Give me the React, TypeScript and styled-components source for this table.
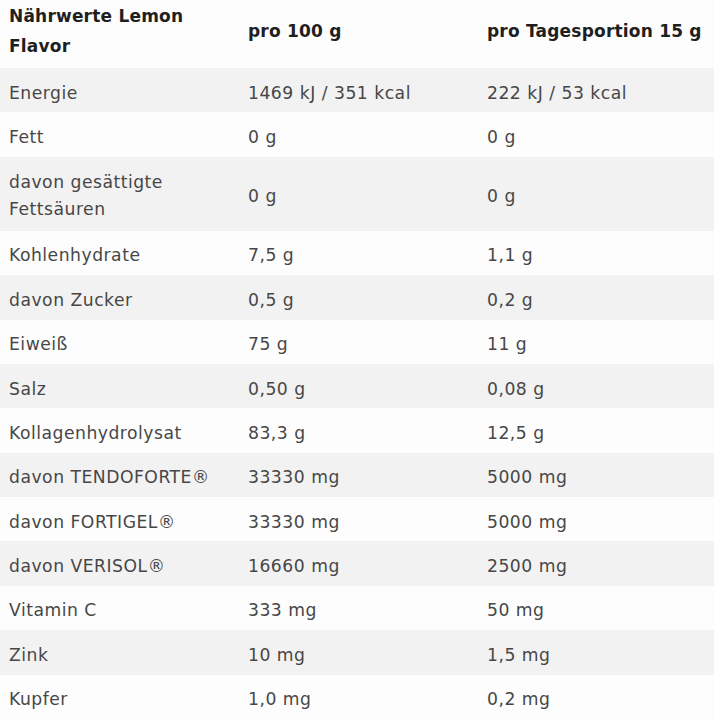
import * as React from "react";
import styled, { createGlobalStyle } from "styled-components";

const GlobalStyle = createGlobalStyle`
  html, body {
    margin: 0;
    padding: 0;
    background: #fdfdfd;
  }
`;

const Table = styled.div`
  width: 714px;
  font-family: "DejaVu Sans", "Liberation Sans", sans-serif;
  color: #474747;
`;

const Row = styled.div<{ $shade?: boolean; $tall?: boolean }>`
  display: grid;
  grid-template-columns: 239px 239px 1fr;
  align-items: center;
  padding: ${(p) => (p.$tall ? "12.5px 0 7.5px" : "11.7px 0 6.7px")};
  padding-left: 9px;
  background: ${(p) => (p.$shade ? "#f2f2f2" : "#fdfdfd")};
  font-size: 17.2px;
  line-height: ${(p) => (p.$tall ? "27px" : "26px")};
  letter-spacing: 0.5px;
`;

const HeaderRow = styled(Row)`
  padding: 0 0 6px 9px;
  height: 68px;
  box-sizing: border-box;
  font-weight: 700;
  font-size: 17px;
  line-height: 30px;
  color: #1f1f1f;
  letter-spacing: 0.2px;
`;

const Cell = styled.div`
  padding-right: 10px;
  white-space: pre-line;
`;

const rows: [string, string, string][] = [
  ["Energie", "1469 kJ / 351 kcal", "222 kJ / 53 kcal"],
  ["Fett", "0 g", "0 g"],
  ["davon gesättigte\nFettsäuren", "0 g", "0 g"],
  ["Kohlenhydrate", "7,5 g", "1,1 g"],
  ["davon Zucker", "0,5 g", "0,2 g"],
  ["Eiweiß", "75 g", "11 g"],
  ["Salz", "0,50 g", "0,08 g"],
  ["Kollagenhydrolysat", "83,3 g", "12,5 g"],
  ["davon TENDOFORTE®", "33330 mg", "5000 mg"],
  ["davon FORTIGEL®", "33330 mg", "5000 mg"],
  ["davon VERISOL®", "16660 mg", "2500 mg"],
  ["Vitamin C", "333 mg", "50 mg"],
  ["Zink", "10 mg", "1,5 mg"],
  ["Kupfer", "1,0 mg", "0,2 mg"],
];

export default function App() {
  return (
    <>
      <GlobalStyle />
      <Table>
        <HeaderRow>
          <Cell>{"Nährwerte Lemon\nFlavor"}</Cell>
          <Cell>pro 100 g</Cell>
          <Cell>pro Tagesportion 15 g</Cell>
        </HeaderRow>
        {rows.map(([name, a, b], i) => (
          <Row key={name} $shade={i % 2 === 0} $tall={name.includes("\n")}>
            <Cell>{name}</Cell>
            <Cell>{a}</Cell>
            <Cell>{b}</Cell>
          </Row>
        ))}
      </Table>
    </>
  );
}
